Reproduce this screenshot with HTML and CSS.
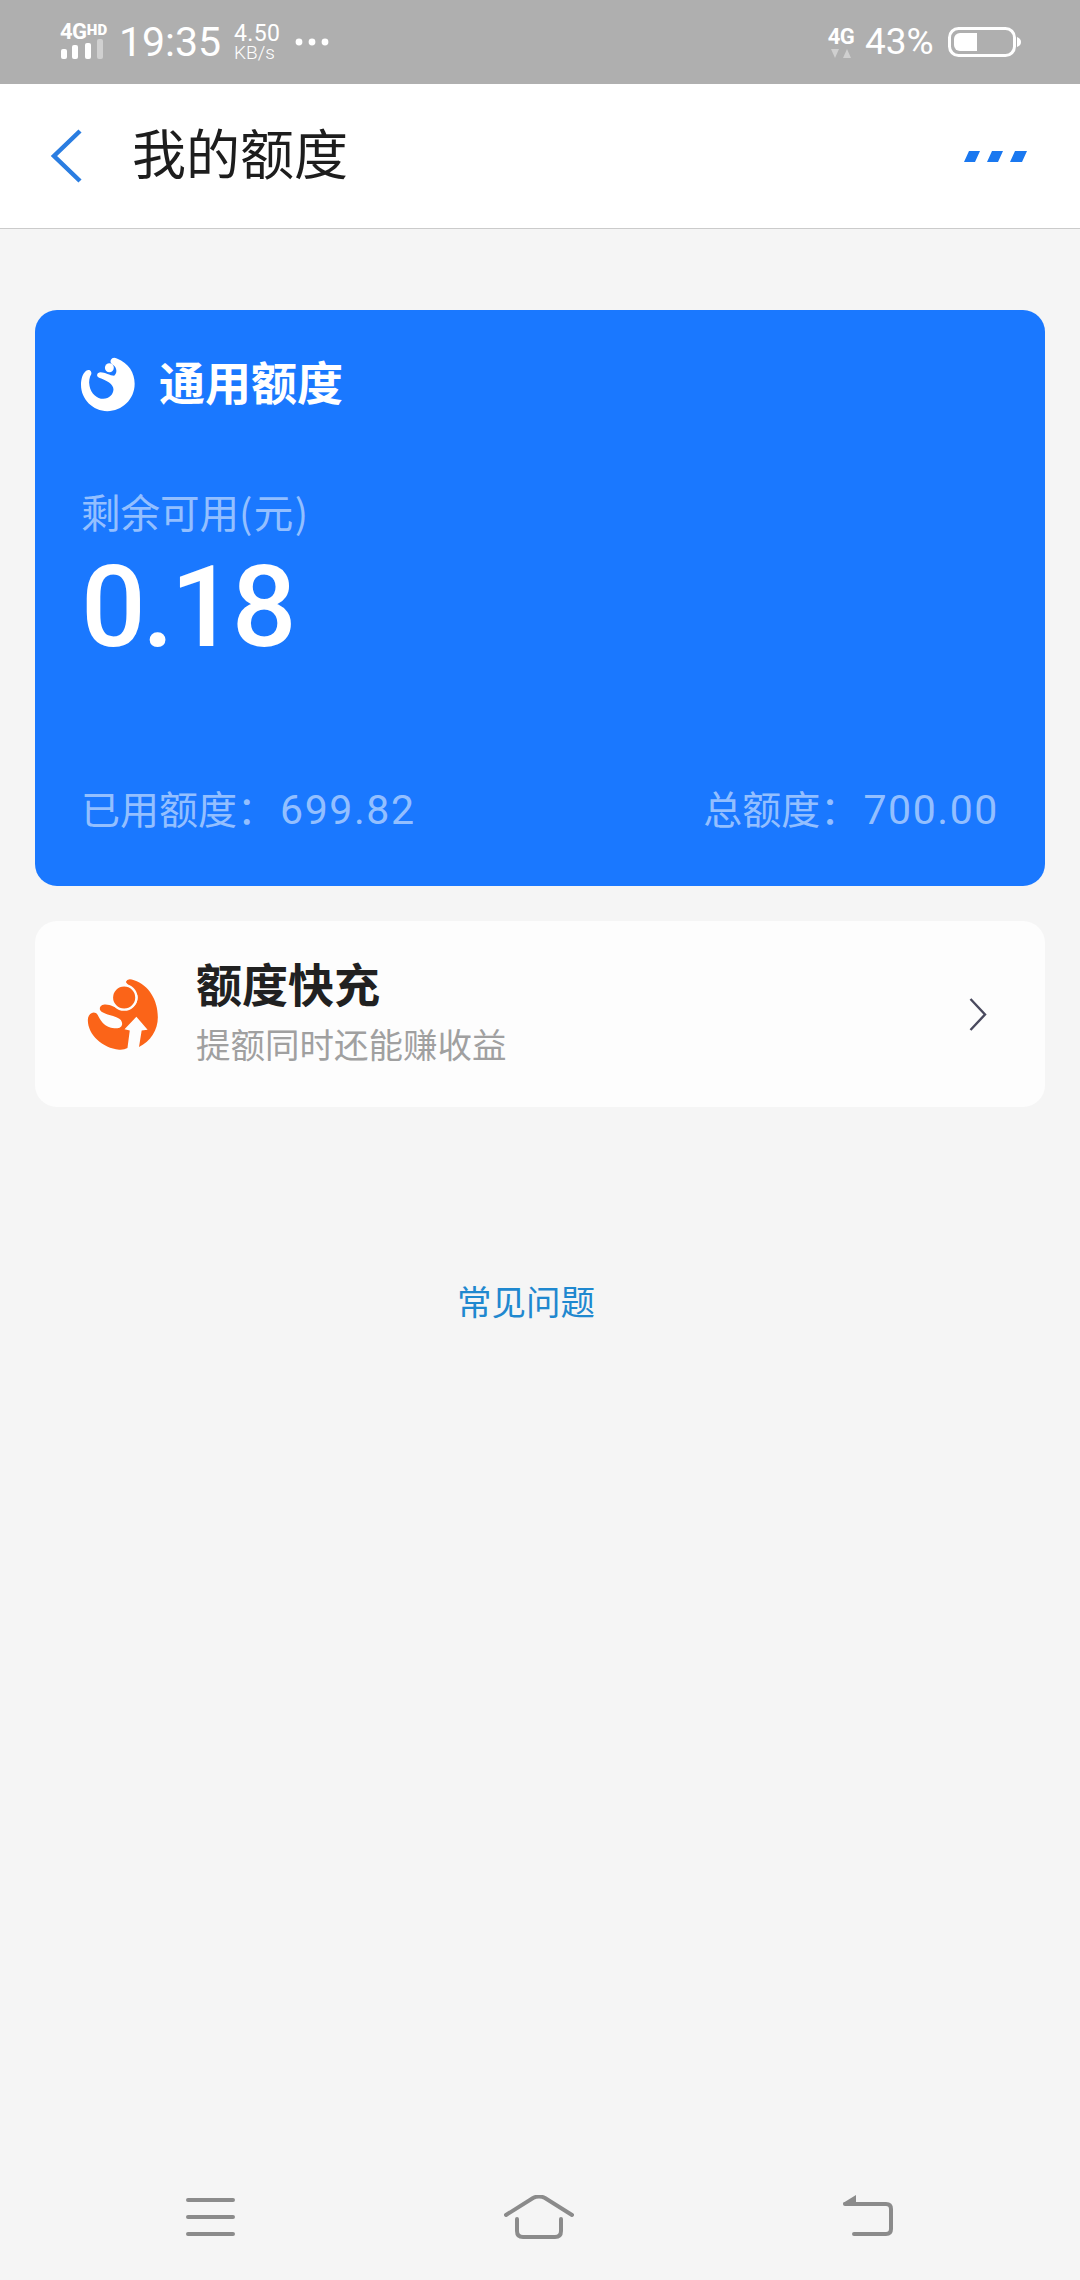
FILE: index.html
```html
<!DOCTYPE html>
<html lang="zh-CN">
<head>
<meta charset="utf-8">
<title>我的额度</title>
<link rel="stylesheet" href="styles.css">
</head>
<body>
<div class="page">
  <div class="status">
    <div class="signal">
      <span class="net">4G<small>HD</small></span>
      <svg class="bars" width="44" height="20" viewBox="0 0 44 20"><rect x="1" y="10" width="6" height="10" rx="2" fill="#fff"/><rect x="12" y="6" width="6" height="14" rx="2" fill="#fff"/><rect x="25" y="4" width="6" height="16" rx="2" fill="#fff"/><rect x="37" y="0" width="6" height="20" rx="2" fill="#d0d0d0"/></svg>
    </div>
    <span class="time">19:35</span>
    <div class="speed"><span class="speed-num">4.50</span><span class="speed-unit">KB/s</span></div>
    <svg class="more" width="34" height="8" viewBox="0 0 34 8"><circle cx="4" cy="4" r="3.4" fill="#fff"/><circle cx="17" cy="4" r="3.4" fill="#fff"/><circle cx="30" cy="4" r="3.4" fill="#fff"/></svg>
    <div class="status-right">
      <div class="sim">
        <span class="net2">4G</span>
        <svg width="20" height="9" viewBox="0 0 20 9"><path d="M0 0h8l-4 9zM12 9h8l-4-9z" fill="#cfcfcf"/></svg>
      </div>
      <span class="pct">43%</span>
      <svg class="battery" width="73" height="30" viewBox="0 0 73 30"><rect x="1.5" y="1.5" width="65" height="27" rx="9" fill="none" stroke="#fff" stroke-width="3"/><path d="M6 12a6 6 0 0 1 6-6h17v18H12a6 6 0 0 1-6-6z" fill="#fff"/><path d="M69 10c3 1 4 3 4 5s-1 4-4 5z" fill="#fff"/></svg>
    </div>
  </div>

  <header class="topbar">
    <svg class="back" width="32" height="54" viewBox="0 0 32 54"><path d="M30 2 4 27l26 25" fill="none" stroke="#2a7de1" stroke-width="4.5"/></svg>
    <h1 class="title">我的额度</h1>
    <svg class="menu" width="64" height="11" viewBox="0 0 64 11"><path d="M5 0h11l-5 11H0zM28 0h11l-5 11H23zM51 0h12l-5 11H46z" fill="#1a78f0"/></svg>
  </header>

  <main class="content">
    <section class="quota-card">
      <div class="quota-head">
        <svg class="quota-logo" width="54" height="56" viewBox="65 62 158 161"><path d="M152 72Q158 62 170 68C205 82 222 110 222 142C222 188 185 222 142 222C100 222 65 188 65 145C65 128 70 112 80 104C88 97 98 104 95 114C90 122 87 135 90 148C94 170 112 186 130 186C148 186 160 172 160 158C160 142 140 132 118 124C108 120 112 108 122 108C135 108 150 118 162 118C172 112 170 95 160 88C152 82 150 78 152 72Z" fill="#fff"/><circle cx="148" cy="95" r="13" fill="#fff"/></svg>
        <h2 class="quota-title">通用额度</h2>
      </div>
      <div class="quota-label">剩余可用<span class="paren">(元)</span></div>
      <div class="quota-value">0.18</div>
      <div class="quota-foot">
        <span>已用额度<span class="colon">：</span><span class="amount">699.82</span></span>
        <span>总额度<span class="colon">：</span><span class="amount">700.00</span></span>
      </div>
    </section>

    <section class="boost-card">
      <svg class="boost-logo" width="72" height="72" viewBox="85 113 213 218"><path d="M200 125Q205 112 225 120C270 135 297 180 297 232C297 270 275 305 240 322L248 272L266 270L232 230L196 268L212 272L205 325Q195 331 180 330C130 325 85 285 85 240C85 220 105 210 115 225C125 245 135 262 165 265C185 268 195 255 185 240C170 225 130 225 122 210C118 195 135 190 150 195C165 200 180 210 205 208C225 205 240 185 235 165C230 150 210 140 200 125Z" fill="#fb6418"/><circle cx="195" cy="172" r="37" fill="#fb6418" stroke="#fdfdfd" stroke-width="7"/></svg>
      <div class="boost-text">
        <div class="boost-title">额度快充</div>
        <div class="boost-sub">提额同时还能赚收益</div>
      </div>
      <svg class="chevron" width="18" height="33" viewBox="0 0 18 33"><path d="M1.5 1 16 16.5 1.5 32" fill="none" stroke="#4a4a5e" stroke-width="2.4"/></svg>
    </section>

    <div class="faq">常见问题</div>
  </main>

  <nav class="navbar">
    <svg class="nav-menu" width="50" height="38" viewBox="0 0 50 38"><path d="M3 2h45M3 19h45M3 36h45" fill="none" stroke="#8b8b8b" stroke-width="4" stroke-linecap="round"/></svg>
    <svg width="70" height="44" viewBox="0 0 70 44"><path d="M2 20 29 3q6-3 12 0l27 17M13 24v12q0 6 6 6h32q6 0 6-6V24" fill="none" stroke="#8b8b8b" stroke-width="4" stroke-linecap="round"/></svg>
    <svg width="52" height="42" viewBox="0 0 52 42"><path d="M3 9h41q5 0 5 5v20q0 5-5 5H12" fill="none" stroke="#8b8b8b" stroke-width="4" stroke-linecap="round"/><path d="M1 8 14 0v10H2z" fill="#8b8b8b"/></svg>
  </nav>
</div>
</body>
</html>
```
FILE: styles.css
```css
* { box-sizing: border-box; }
html, body { margin: 0; padding: 0; }
body { font-family: "Roboto", "Noto Sans CJK SC", sans-serif; }
.page { width: 1080px; height: 2280px; display: flex; flex-direction: column; background: #f5f5f5; overflow: hidden; }

.status { height: 84px; flex: none; background: #afafaf; color: #fff; display: flex; align-items: center; padding: 0 59px 0 60px; }
.signal { display: flex; flex-direction: column; width: 59px; margin-top: -6px; }
.net { font: 700 22px/20px "Roboto", sans-serif; letter-spacing: -0.5px; height: 18px; }
.net small { font-size: 15px; vertical-align: 4px; font-weight: 900; letter-spacing: .3px; }
.bars { display: block; margin-top: 1px; }
.time { font: 400 41px/48px "Roboto", sans-serif; width: 115px; }
.speed { display: flex; flex-direction: column; width: 61px; margin-top: -1px; }
.speed-num { font: 400 23px/21px "Roboto", sans-serif; letter-spacing: .4px; }
.speed-unit { font: 300 19px/17px "Roboto", sans-serif; }
.status-right { margin-left: auto; display: flex; align-items: center; }
.sim { display: flex; flex-direction: column; align-items: center; width: 24px; margin-right: 12px; }
.net2 { font: 700 22px/20px "Roboto", sans-serif; letter-spacing: -.5px; }
.sim svg { display: block; margin-top: 2px; }
.pct { font: 400 37px/42px "Roboto", sans-serif; width: 83px; }
.battery { display: block; }

.topbar { height: 145px; flex: none; background: #fff; border-bottom: 1px solid #cbcbcb; display: flex; align-items: center; padding: 0 52px 0 50px; }
.back { flex: none; }
.title { margin: -8px 0 0 50px; font: 400 54px/70px "Noto Sans CJK SC", sans-serif; color: #1d1d1d; flex: 1; }
.menu { flex: none; }

.content { flex: 1; display: flex; flex-direction: column; padding: 81px 35px 0; }
.quota-card { height: 576px; background: #1a78ff; border-radius: 22px; padding: 46px 46px 0; color: #fff; display: flex; flex-direction: column; }
.quota-head { display: flex; align-items: center; gap: 24px; height: 56px; }
.quota-title { margin: -8px 0 0; font: 700 46px/56px "Noto Sans CJK SC", sans-serif; }
.quota-label { margin-top: 74px; font: 400 39.5px/50px "Noto Sans CJK SC", sans-serif; color: rgba(255,255,255,.55); }
.paren { letter-spacing: 1.5px; }
.quota-value { font: 500 114px/120px "Roboto", sans-serif; margin-top: 11px; letter-spacing: -3.5px; }
.quota-foot { margin-top: auto; margin-bottom: 51px; display: flex; justify-content: space-between; font: 400 39px/50px "Noto Sans CJK SC", "Roboto", sans-serif; color: rgba(255,255,255,.55); }
.colon { margin-right: 4px; }
.amount { font: 400 41px/50px "Roboto", sans-serif; letter-spacing: 1.6px; }

.boost-card { height: 186px; margin-top: 35px; background: #fdfdfd; border-radius: 22px; display: flex; align-items: center; padding: 0 58px 0 52px; }
.boost-logo { flex: none; }
.boost-text { margin-left: 37px; flex: 1; }
.boost-title { font: 700 46px/60px "Noto Sans CJK SC", sans-serif; color: #212121; margin-top: -9px; }
.boost-sub { font: 400 34.5px/48px "Noto Sans CJK SC", sans-serif; color: #a0a0a0; margin-top: 7px; }
.chevron { flex: none; }

.faq { margin-top: 168px; padding-right: 28px; text-align: center; font: 400 34.5px/50px "Noto Sans CJK SC", sans-serif; color: #1f88cf; }

.navbar { height: 110px; flex: none; background: #f5f5f5; display: flex; justify-content: space-between; align-items: flex-start; padding: 25px 186px 0 185px; }
.nav-menu { margin-top: 3px; }
```
